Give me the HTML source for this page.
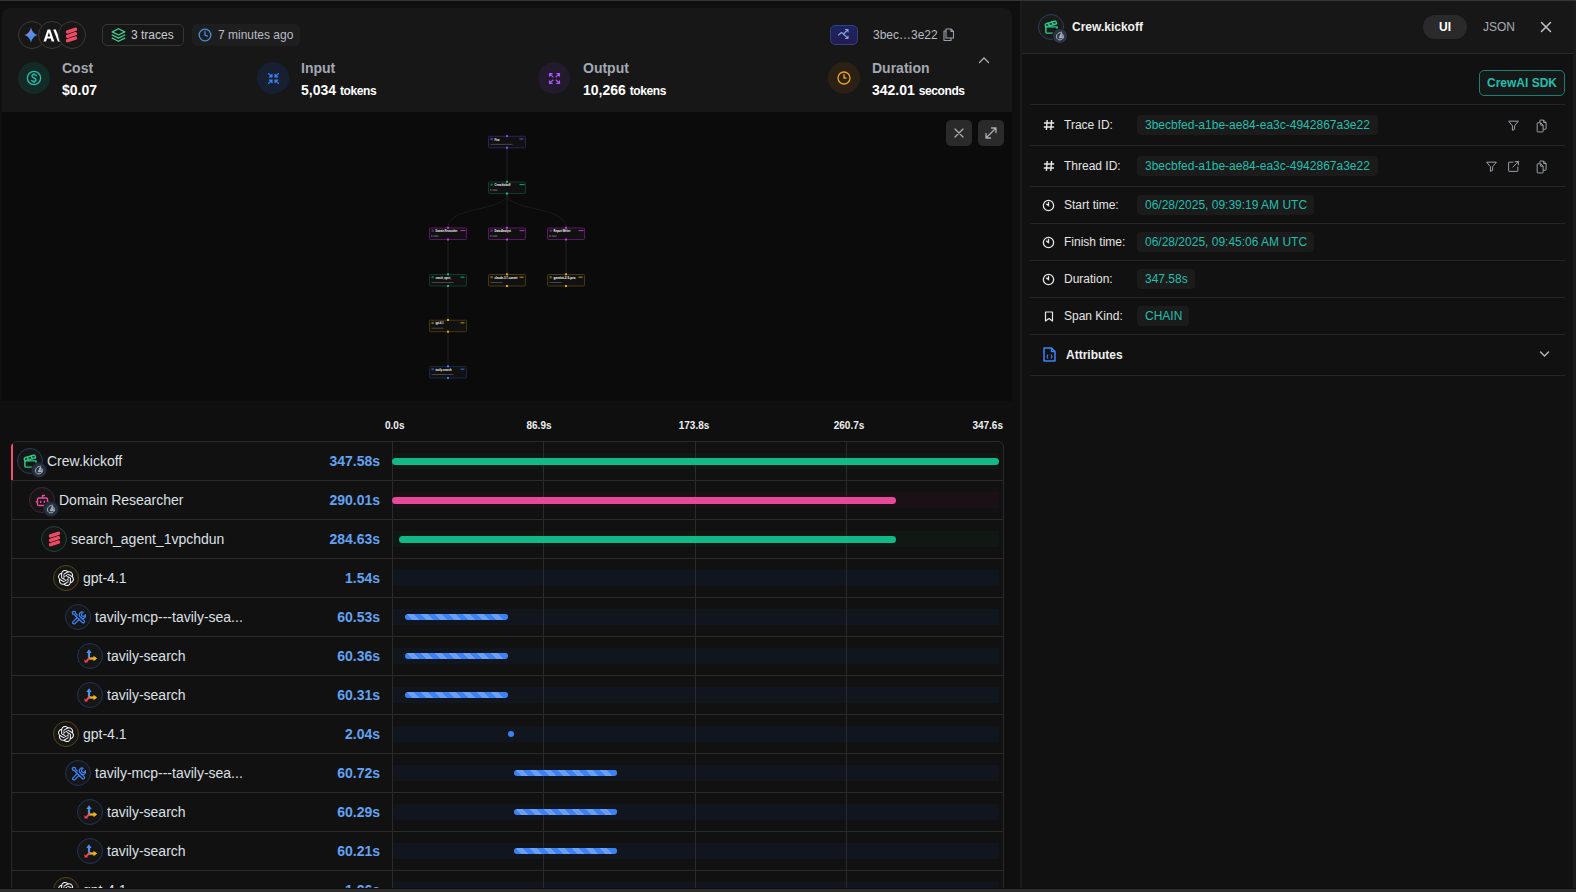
<!DOCTYPE html>
<html><head><meta charset="utf-8">
<style>
*{box-sizing:border-box;margin:0;padding:0}
html,body{width:1576px;height:892px;overflow:hidden;background:#0f0f0f;font-family:"Liberation Sans",sans-serif;color:#e6e6e6}
.abs{position:absolute}
.txt{white-space:nowrap;line-height:1}
</style></head><body>
<div class="abs" style="left:0;top:0;width:1576px;height:1px;background:#353535"></div>
<div class="abs" style="left:2px;top:8px;width:1010px;height:104px;background:#171717;border-radius:8px 8px 0 0"></div>
<div class="abs" style="left:2px;top:112px;width:1010px;height:289px;background:#0b0b0b"></div>
<!-- HEADER -->
<div class="abs" style="left:18px;top:21px;width:28px;height:28px;border-radius:50%;border:1px solid #3d3a33;background:#171717"></div>
<svg class="abs" style="left:24px;top:27px" width="14" height="16" viewBox="0 0 14 16"><defs><linearGradient id="gg" x1="0" y1="0" x2="1" y2="1"><stop offset="0" stop-color="#c07ad8"/><stop offset="0.6" stop-color="#4a8ee8"/><stop offset="1" stop-color="#2aa8f0"/></linearGradient></defs><path d="M7 0.5 C8 4.4 9.8 7 13.5 8 C9.8 9 8 11.6 7 15.5 C6 11.6 4.2 9 0.5 8 C4.2 7 6 4.4 7 0.5Z" fill="url(#gg)"/></svg>
<div class="abs" style="left:38px;top:21px;width:28px;height:28px;border-radius:50%;border:1px solid #3d3a33;background:#171717"></div>
<svg class="abs" style="left:43px;top:29px" width="18" height="13" viewBox="0 0 18 13"><path d="M0.5 12.5 L4.6 0.5 L7.2 0.5 L11.3 12.5 L8.7 12.5 L7.8 9.6 L4 9.6 L3.1 12.5Z M4.6 7.4 L7.2 7.4 L5.9 3.2Z" fill="#fff"/><path d="M10.2 0.5 L12.8 0.5 L17.5 12.5 L14.9 12.5Z" fill="#fff"/></svg>
<div class="abs" style="left:58px;top:21px;width:28px;height:28px;border-radius:50%;border:1px solid #3d3a33;background:#171717"></div>
<svg class="abs" style="left:65px;top:27px" width="13" height="16" viewBox="0 0 13 16"><g stroke="#ee4a62" stroke-width="3.5" stroke-linecap="round"><path d="M2.6 4.9 L10.4 2.3"/><path d="M2.6 9.3 L10.4 6.7"/><path d="M2.6 13.7 L10.4 11.1"/></g></svg>

<div class="abs" style="left:102px;top:24px;width:82px;height:22px;border-radius:5px;border:1px solid #353535"></div>
<svg class="abs" style="left:111px;top:27px" width="15" height="16" viewBox="0 0 24 24" fill="none" stroke="#3fce8e" stroke-width="2.2" stroke-linejoin="round" stroke-linecap="round"><path d="M12 2 L2 7 L12 12 L22 7 Z"/><path d="M2 12 L12 17 L22 12"/><path d="M2 17 L12 22 L22 17"/></svg>
<div class="abs txt" style="left:131px;top:29px;font-size:12px;color:#c9ccd2">3 traces</div>

<div class="abs" style="left:192px;top:24px;width:108px;height:22px;border-radius:5px;background:#1e1e1e"></div>
<svg class="abs" style="left:198px;top:28px" width="14" height="14" viewBox="0 0 24 24" fill="none" stroke="#4a90e2" stroke-width="2.2" stroke-linecap="round"><circle cx="12" cy="12" r="10"/><path d="M12 6 V12 L16 14"/></svg>
<div class="abs txt" style="left:218px;top:29px;font-size:12px;color:#b8bcc4">7 minutes ago</div>

<!-- right of header -->
<div class="abs" style="left:830px;top:25px;width:28px;height:20px;border-radius:5px;background:linear-gradient(180deg,#1c2660,#221c52);border:1px solid #34407a"></div>
<svg class="abs" style="left:837px;top:28px" width="14" height="14" viewBox="0 0 14 14" fill="none" stroke="#8fa0e0" stroke-width="1.1" stroke-linecap="round" stroke-linejoin="round"><path d="M1.5 7 L4.5 4.5 L6.5 6 L11 1.5 M8.5 1.5 H11 V4"/><path d="M6.5 6 L11 10.5 M11 8 V10.5 H8.5"/></svg>
<div class="abs txt" style="left:873px;top:29px;font-size:12px;color:#b8bcc4">3bec…3e22</div>
<svg class="abs" style="left:943px;top:28px" width="11" height="13" viewBox="0 0 11 13" fill="none" stroke="#9ca0a8" stroke-width="1.1" stroke-linejoin="round"><path d="M3 1 H8 L10.5 3.5 V10 H3 Z"/><path d="M8 1 V3.5 H10.5"/><path d="M3 3 H1 V12.5 H8 V10"/></svg>
<svg class="abs" style="left:978px;top:56px" width="12" height="9" viewBox="0 0 12 9" fill="none" stroke="#a8acb4" stroke-width="1.3" stroke-linecap="round"><path d="M1.5 6.5 L6 2 L10.5 6.5"/></svg>

<!-- stats -->
<div class="abs" style="left:18px;top:62px;width:32px;height:32px;border-radius:50%;background:#132a26"></div>
<svg class="abs" style="left:26px;top:70px" width="16" height="16" viewBox="0 0 24 24" fill="none" stroke="#22bfae" stroke-width="2" stroke-linecap="round"><circle cx="12" cy="12" r="10"/><path d="M15.5 8.5 C15 7.5 14 7 12 7 C10 7 9 8 9 9.5 C9 12.5 15 11.5 15 14.5 C15 16 14 17 12 17 C10 17 9 16.5 8.5 15.5 M12 5 V7 M12 17 V19"/></svg>
<div class="abs txt" style="left:62px;top:61px;font-size:14px;font-weight:bold;color:#a3a8b2">Cost</div>
<div class="abs txt" style="left:62px;top:83px;font-size:14px;font-weight:bold;color:#fff">$0.07</div>

<div class="abs" style="left:257px;top:62px;width:32px;height:32px;border-radius:50%;background:#172033"></div>
<svg class="abs" style="left:266.5px;top:71.5px" width="13" height="13" viewBox="0 0 16 16" fill="none" stroke="#3b82f6" stroke-width="1.7" stroke-linecap="round"><path d="M2 2 L6 6 M6 3 V6 H3"/><path d="M14 2 L10 6 M10 3 V6 H13"/><path d="M2 14 L6 10 M3 10 H6 V13"/><path d="M14 14 L10 10 M13 10 H10 V13"/></svg>
<div class="abs txt" style="left:301px;top:61px;font-size:14px;font-weight:bold;color:#a3a8b2">Input</div>
<div class="abs txt" style="left:301px;top:83px;font-size:14px;font-weight:bold;color:#fff">5,034 <span style="font-size:12px;letter-spacing:-0.4px">tokens</span></div>

<div class="abs" style="left:538px;top:62px;width:32px;height:32px;border-radius:50%;background:#231a2e"></div>
<svg class="abs" style="left:547.5px;top:71.5px" width="13" height="13" viewBox="0 0 16 16" fill="none" stroke="#a855f7" stroke-width="1.7" stroke-linecap="round"><path d="M2 2 L6 6 M2 5 V2 H5"/><path d="M14 2 L10 6 M11 2 H14 V5"/><path d="M2 14 L6 10 M2 11 V14 H5"/><path d="M14 14 L10 10 M14 11 V14 H11"/></svg>
<div class="abs txt" style="left:583px;top:61px;font-size:14px;font-weight:bold;color:#a3a8b2">Output</div>
<div class="abs txt" style="left:583px;top:83px;font-size:14px;font-weight:bold;color:#fff">10,266 <span style="font-size:12px;letter-spacing:-0.4px">tokens</span></div>

<div class="abs" style="left:828px;top:62px;width:32px;height:32px;border-radius:50%;background:#2a2114"></div>
<svg class="abs" style="left:836px;top:70px" width="16" height="16" viewBox="0 0 24 24" fill="none" stroke="#f0a020" stroke-width="2" stroke-linecap="round"><circle cx="12" cy="12" r="9"/><path d="M12 7 V12 H15"/></svg>
<div class="abs txt" style="left:872px;top:61px;font-size:14px;font-weight:bold;color:#a3a8b2">Duration</div>
<div class="abs txt" style="left:872px;top:83px;font-size:14px;font-weight:bold;color:#fff">342.01 <span style="font-size:12px;letter-spacing:-0.4px">seconds</span></div>

<svg class="abs" style="left:0;top:0" width="1012" height="401" viewBox="0 0 1012 401" font-family="Liberation Sans">
<g stroke="#333" stroke-width="0.6" fill="none">
<path d="M507 146.5 V182"/>
<path d="M507 193.5 V228"/>
<path d="M507 193.5 C507 212 448 205 448 228" stroke-dasharray="1.5 0.8"/>
<path d="M507 193.5 C507 212 566 205 566 228" stroke-dasharray="1.5 0.8"/>
<path d="M448 239.5 V274.5"/><path d="M507 239.5 V274.5"/><path d="M566 239.5 V274.5"/>
<path d="M448 285.7 V320"/><path d="M448 331.7 V366.5"/>
</g>
<rect x="488.5" y="136.3" width="37" height="11.5" rx="1" fill="#111" stroke="#2e2466" stroke-width="0.9"/>
<rect x="490.5" y="137.9" width="2.2" height="2.2" fill="#8b5cf6" opacity="0.55"/>
<text x="494.5" y="140.5" font-size="3.4" font-weight="bold" fill="#ffffff" textLength="5" lengthAdjust="spacingAndGlyphs">Flow</text>
<rect x="519.5" y="138.5" width="4" height="0.9" fill="#7b4ff0"/>
<rect x="490.5" y="143.9" width="22" height="0.7" fill="#aaa" opacity="0.5"/>
<rect x="506" y="135.10000000000002" width="2" height="2" fill="#7b4ff0"/>
<rect x="506" y="146.8" width="2" height="2" fill="#7b4ff0"/>
<rect x="488.5" y="182" width="37" height="11.5" rx="1" fill="#111" stroke="#12402d" stroke-width="0.9"/>
<rect x="490.5" y="183.6" width="2.2" height="2.2" fill="#12b886" opacity="0.55"/>
<text x="494.5" y="186.2" font-size="3.4" font-weight="bold" fill="#ffffff" textLength="16" lengthAdjust="spacingAndGlyphs">Crew.kickoff</text>
<rect x="519.5" y="184.2" width="5" height="0.9" fill="#12b886"/>
<rect x="490.5" y="189.2" width="0.8" height="1.6" fill="#999"/><rect x="492.5" y="189.6" width="5" height="0.9" fill="#aaa" opacity="0.7"/>
<rect x="506" y="180.8" width="2" height="2" fill="#12b886"/>
<rect x="506" y="192.5" width="2" height="2" fill="#12b886"/>
<rect x="429.5" y="228" width="37" height="11.5" rx="1" fill="#111" stroke="#641a74" stroke-width="0.9"/>
<rect x="431.5" y="229.6" width="2.2" height="2.2" fill="#d030d8" opacity="0.55"/>
<text x="435.5" y="232.2" font-size="3.4" font-weight="bold" fill="#ffffff" textLength="22" lengthAdjust="spacingAndGlyphs">Domain Researcher</text>
<rect x="460.5" y="230.2" width="5" height="0.9" fill="#d030d8"/>
<rect x="431.5" y="235.2" width="0.8" height="1.6" fill="#999"/><rect x="433.5" y="235.6" width="5" height="0.9" fill="#aaa" opacity="0.7"/>
<rect x="447" y="226.8" width="2" height="2" fill="#d030d8"/>
<rect x="447" y="238.5" width="2" height="2" fill="#d030d8"/>
<rect x="488.5" y="228" width="37" height="11.5" rx="1" fill="#111" stroke="#641a74" stroke-width="0.9"/>
<rect x="490.5" y="229.6" width="2.2" height="2.2" fill="#d030d8" opacity="0.55"/>
<text x="494.5" y="232.2" font-size="3.4" font-weight="bold" fill="#ffffff" textLength="16.5" lengthAdjust="spacingAndGlyphs">Data Analyst</text>
<rect x="519.5" y="230.2" width="5" height="0.9" fill="#d030d8"/>
<rect x="490.5" y="235.2" width="0.8" height="1.6" fill="#999"/><rect x="492.5" y="235.6" width="5" height="0.9" fill="#aaa" opacity="0.7"/>
<rect x="506" y="226.8" width="2" height="2" fill="#d030d8"/>
<rect x="506" y="238.5" width="2" height="2" fill="#d030d8"/>
<rect x="547.5" y="228" width="37" height="11.5" rx="1" fill="#111" stroke="#641a74" stroke-width="0.9"/>
<rect x="549.5" y="229.6" width="2.2" height="2.2" fill="#d030d8" opacity="0.55"/>
<text x="553.5" y="232.2" font-size="3.4" font-weight="bold" fill="#ffffff" textLength="17" lengthAdjust="spacingAndGlyphs">Report Writer</text>
<rect x="578.5" y="230.2" width="5" height="0.9" fill="#d030d8"/>
<rect x="549.5" y="235.2" width="0.8" height="1.6" fill="#999"/><rect x="551.5" y="235.6" width="5" height="0.9" fill="#aaa" opacity="0.7"/>
<rect x="565" y="226.8" width="2" height="2" fill="#d030d8"/>
<rect x="565" y="238.5" width="2" height="2" fill="#d030d8"/>
<rect x="429.5" y="274.5" width="37" height="11.5" rx="1" fill="#111" stroke="#12402d" stroke-width="0.9"/>
<rect x="431.5" y="276.1" width="2.2" height="2.2" fill="#12b886" opacity="0.55"/>
<text x="435.5" y="278.7" font-size="3.4" font-weight="bold" fill="#ffffff" textLength="16" lengthAdjust="spacingAndGlyphs">search_agent_</text>
<rect x="460.5" y="276.7" width="4" height="0.9" fill="#12b886"/>
<rect x="431.5" y="282.1" width="22" height="0.7" fill="#aaa" opacity="0.5"/>
<rect x="447" y="273.3" width="2" height="2" fill="#12b886"/>
<rect x="447" y="285.0" width="2" height="2" fill="#12b886"/>
<rect x="488.5" y="274.5" width="37" height="11.5" rx="1" fill="#111" stroke="#4e3c0e" stroke-width="0.9"/>
<rect x="490.5" y="276.1" width="2.2" height="2.2" fill="#e0a800" opacity="0.55"/>
<text x="494.5" y="278.7" font-size="3.4" font-weight="bold" fill="#ffffff" textLength="23" lengthAdjust="spacingAndGlyphs">claude-3.7-sonnet</text>
<rect x="519.5" y="276.7" width="4" height="0.9" fill="#e0a800"/>
<rect x="490.5" y="282.1" width="12" height="0.7" fill="#aaa" opacity="0.5"/>
<rect x="506" y="273.3" width="2" height="2" fill="#e0a800"/>
<rect x="506" y="285.0" width="2" height="2" fill="#e0a800"/>
<rect x="547.5" y="274.5" width="37" height="11.5" rx="1" fill="#111" stroke="#4e3c0e" stroke-width="0.9"/>
<rect x="549.5" y="276.1" width="2.2" height="2.2" fill="#e0a800" opacity="0.55"/>
<text x="553.5" y="278.7" font-size="3.4" font-weight="bold" fill="#ffffff" textLength="22" lengthAdjust="spacingAndGlyphs">gemini-2.5-pro</text>
<rect x="578.5" y="276.7" width="4" height="0.9" fill="#e0a800"/>
<rect x="549.5" y="282.1" width="12" height="0.7" fill="#aaa" opacity="0.5"/>
<rect x="565" y="273.3" width="2" height="2" fill="#e0a800"/>
<rect x="565" y="285.0" width="2" height="2" fill="#e0a800"/>
<rect x="429.5" y="320.2" width="37" height="11.5" rx="1" fill="#111" stroke="#4e3c0e" stroke-width="0.9"/>
<rect x="431.5" y="321.8" width="2.2" height="2.2" fill="#e0a800" opacity="0.55"/>
<text x="435.5" y="324.4" font-size="3.4" font-weight="bold" fill="#ffffff" textLength="8" lengthAdjust="spacingAndGlyphs">gpt-4.1</text>
<rect x="460.5" y="322.4" width="4" height="0.9" fill="#e0a800"/>
<rect x="431.5" y="327.8" width="12" height="0.7" fill="#aaa" opacity="0.5"/>
<rect x="447" y="319.0" width="2" height="2" fill="#e0a800"/>
<rect x="447" y="330.7" width="2" height="2" fill="#e0a800"/>
<rect x="429.5" y="366.5" width="37" height="11.5" rx="1" fill="#111" stroke="#18284e" stroke-width="0.9"/>
<rect x="431.5" y="368.1" width="2.2" height="2.2" fill="#3b82f6" opacity="0.55"/>
<text x="435.5" y="370.7" font-size="3.4" font-weight="bold" fill="#ffffff" textLength="16" lengthAdjust="spacingAndGlyphs">tavily-search</text>
<rect x="460.5" y="368.7" width="4" height="0.9" fill="#3b82f6"/>
<rect x="431.5" y="374.1" width="22" height="0.7" fill="#aaa" opacity="0.5"/>
<rect x="447" y="365.3" width="2" height="2" fill="#3b82f6"/>
<rect x="447" y="377.0" width="2" height="2" fill="#3b82f6"/>
</svg>
<div class="abs" style="left:946px;top:120px;width:26px;height:26px;border-radius:5px;background:#2a2a2a"></div>
<svg class="abs" style="left:953px;top:127px" width="12" height="12" viewBox="0 0 12 12" stroke="#a8acb4" stroke-width="1.3" stroke-linecap="round"><path d="M2 2 L10 10 M10 2 L2 10"/></svg>
<div class="abs" style="left:978px;top:120px;width:26px;height:26px;border-radius:5px;background:#2a2a2a"></div>
<svg class="abs" style="left:984px;top:126px" width="14" height="14" viewBox="0 0 14 14" fill="none" stroke="#a8acb4" stroke-width="1.3" stroke-linecap="round" stroke-linejoin="round"><path d="M2 12 L12 2 M7.5 2 H12 V6.5 M2 7.5 V12 H6.5"/></svg>
<div class="abs" style="left:0;top:401px;width:1012px;height:488px;overflow:hidden">
<div class="abs" style="left:0;top:-401px;width:1012px;height:892px">
<div class="abs txt" style="left:385px;top:421px;font-size:10px;font-weight:bold;color:#f0f0f0">0.0s</div>
<div class="abs txt" style="left:499px;width:80px;text-align:center;top:421px;font-size:10px;font-weight:bold;color:#f0f0f0">86.9s</div>
<div class="abs txt" style="left:654px;width:80px;text-align:center;top:421px;font-size:10px;font-weight:bold;color:#f0f0f0">173.8s</div>
<div class="abs txt" style="left:809px;width:80px;text-align:center;top:421px;font-size:10px;font-weight:bold;color:#f0f0f0">260.7s</div>
<div class="abs txt" style="left:903px;width:100px;text-align:right;top:421px;font-size:10px;font-weight:bold;color:#f0f0f0">347.6s</div>
<div class="abs" style="left:11px;top:441px;width:993px;height:460px;border:1px solid #2a2a2a;border-radius:6px 6px 0 0;background:#111"></div>
<div class="abs" style="left:393px;top:453px;width:606px;height:16px;background:#101814"></div>
<div class="abs" style="left:393px;top:492px;width:606px;height:16px;background:#1a1116"></div>
<div class="abs" style="left:393px;top:531px;width:606px;height:16px;background:#101814"></div>
<div class="abs" style="left:393px;top:570px;width:606px;height:16px;background:#11151d"></div>
<div class="abs" style="left:393px;top:609px;width:606px;height:16px;background:#11151d"></div>
<div class="abs" style="left:393px;top:648px;width:606px;height:16px;background:#11151d"></div>
<div class="abs" style="left:393px;top:687px;width:606px;height:16px;background:#11151d"></div>
<div class="abs" style="left:393px;top:726px;width:606px;height:16px;background:#11151d"></div>
<div class="abs" style="left:393px;top:765px;width:606px;height:16px;background:#11151d"></div>
<div class="abs" style="left:393px;top:804px;width:606px;height:16px;background:#11151d"></div>
<div class="abs" style="left:393px;top:843px;width:606px;height:16px;background:#11151d"></div>
<div class="abs" style="left:393px;top:882px;width:606px;height:16px;background:#11151d"></div>
<div class="abs" style="left:392px;top:442px;width:1px;height:447px;background:#2a2a2a"></div>
<div class="abs" style="left:543px;top:442px;width:1px;height:447px;background:#2a2a2a"></div>
<div class="abs" style="left:695px;top:442px;width:1px;height:447px;background:#2a2a2a"></div>
<div class="abs" style="left:846px;top:442px;width:1px;height:447px;background:#2a2a2a"></div>
<div class="abs" style="left:17px;top:448px;width:26px;height:26px;border-radius:50%;border:1px solid #2a3f5c;background:#161616;display:flex;align-items:center;justify-content:center"><svg width="15" height="15" viewBox="0 0 24 24" fill="none" stroke="#2bc98a" stroke-width="2.3" stroke-linejoin="round" stroke-linecap="round"><path d="M20.2 6 3 11l-.9-2.4c-.3-1.1.3-2.2 1.3-2.5l13.5-4c1.1-.3 2.2.3 2.5 1.3Z"/><path d="m6.2 5.3 3.1 3.9"/><path d="m12.4 3.4 3.1 4"/><path d="M3 11h18v8a2 2 0 0 1-2 2H5a2 2 0 0 1-2-2Z"/></svg></div>
<div class="abs" style="left:31px;top:462px;width:16px;height:16px;border-radius:50%;background:#263040;border:1px solid #1a1f28;display:flex;align-items:center;justify-content:center"><svg width="10" height="10" viewBox="0 0 10 10" fill="none" stroke="#c8ccd4" stroke-width="0.8" stroke-linecap="round"><path d="M6.8 1.2 C3.8 1 1.3 3.3 1.5 6 C1.7 8 3.3 9 5 8.9 C6.8 8.8 8.4 7.6 8.6 5.6 C8.7 4.5 8.2 3.6 7.5 3.2"/><path d="M6.2 2.6 L4.2 6.8 L7.2 6.6 Z" fill="#9aa0aa"/></svg></div>
<div class="abs txt" style="left:47px;top:454px;font-size:14px;color:#dde0e5">Crew.kickoff</div>
<div class="abs txt" style="left:280px;width:100px;text-align:right;top:454px;font-size:14px;font-weight:bold;color:#62a2f2">347.58s</div>
<div class="abs" style="left:392px;top:457.5px;width:607px;height:7px;border-radius:4px;background:#12b886"></div>
<div class="abs" style="left:12px;top:480px;width:991px;height:1px;background:#2a2a2a"></div>
<div class="abs" style="left:29px;top:487px;width:26px;height:26px;border-radius:50%;border:1px solid #4a2238;background:#161616;display:flex;align-items:center;justify-content:center"><svg width="15" height="15" viewBox="0 0 24 24" fill="none" stroke="#e8489a" stroke-width="2.3" stroke-linejoin="round" stroke-linecap="round"><path d="M12 8V4H15"/><rect width="16" height="12" x="4" y="8" rx="2"/><path d="M2 14h2M20 14h2M15 13v2M9 13v2"/></svg></div>
<div class="abs" style="left:43px;top:501px;width:16px;height:16px;border-radius:50%;background:#263040;border:1px solid #1a1f28;display:flex;align-items:center;justify-content:center"><svg width="10" height="10" viewBox="0 0 10 10" fill="none" stroke="#c8ccd4" stroke-width="0.8" stroke-linecap="round"><path d="M6.8 1.2 C3.8 1 1.3 3.3 1.5 6 C1.7 8 3.3 9 5 8.9 C6.8 8.8 8.4 7.6 8.6 5.6 C8.7 4.5 8.2 3.6 7.5 3.2"/><path d="M6.2 2.6 L4.2 6.8 L7.2 6.6 Z" fill="#9aa0aa"/></svg></div>
<div class="abs txt" style="left:59px;top:493px;font-size:14px;color:#dde0e5">Domain Researcher</div>
<div class="abs txt" style="left:280px;width:100px;text-align:right;top:493px;font-size:14px;font-weight:bold;color:#62a2f2">290.01s</div>
<div class="abs" style="left:392px;top:496.5px;width:504px;height:7px;border-radius:4px;background:#e8489a"></div>
<div class="abs" style="left:12px;top:519px;width:991px;height:1px;background:#2a2a2a"></div>
<div class="abs" style="left:41px;top:526px;width:26px;height:26px;border-radius:50%;border:1px solid #1c4a34;background:#161616;display:flex;align-items:center;justify-content:center"><svg width="13" height="16" viewBox="0 0 13 16"><g stroke="#ee4a62" stroke-width="3.5" stroke-linecap="round"><path d="M2.6 4.9 L10.4 2.3"/><path d="M2.6 9.3 L10.4 6.7"/><path d="M2.6 13.7 L10.4 11.1"/></g></svg></div>
<div class="abs txt" style="left:71px;top:532px;font-size:14px;color:#dde0e5">search_agent_1vpchdun</div>
<div class="abs txt" style="left:280px;width:100px;text-align:right;top:532px;font-size:14px;font-weight:bold;color:#62a2f2">284.63s</div>
<div class="abs" style="left:399px;top:535.5px;width:497px;height:7px;border-radius:4px;background:#12b886"></div>
<div class="abs" style="left:12px;top:558px;width:991px;height:1px;background:#2a2a2a"></div>
<div class="abs" style="left:53px;top:565px;width:26px;height:26px;border-radius:50%;border:1px solid #5a4510;background:#161616;display:flex;align-items:center;justify-content:center"><svg width="16" height="16" viewBox="0 0 24 24"><path fill="#f4f4f4" d="M22.2819 9.8211a5.9847 5.9847 0 0 0-.5157-4.9108 6.0462 6.0462 0 0 0-6.5098-2.9A6.0651 6.0651 0 0 0 4.9807 4.1818a5.9847 5.9847 0 0 0-3.9977 2.9 6.0462 6.0462 0 0 0 .7427 7.0966 5.98 5.98 0 0 0 .511 4.9107 6.051 6.051 0 0 0 6.5146 2.9001A5.9847 5.9847 0 0 0 13.2599 24a6.0557 6.0557 0 0 0 5.7718-4.2058 5.9894 5.9894 0 0 0 3.9977-2.9001 6.0557 6.0557 0 0 0-.7475-7.0729zm-9.022 12.6081a4.4755 4.4755 0 0 1-2.8764-1.0408l.1419-.0804 4.7783-2.7582a.7948.7948 0 0 0 .3927-.6813v-6.7369l2.02 1.1686a.071.071 0 0 1 .038.052v5.5826a4.504 4.504 0 0 1-4.4945 4.4944zm-9.6607-4.1254a4.4708 4.4708 0 0 1-.5346-3.0137l.142.0852 4.783 2.7582a.7712.7712 0 0 0 .7806 0l5.8428-3.3685v2.3324a.0804.0804 0 0 1-.0332.0615L9.74 19.9502a4.4992 4.4992 0 0 1-6.1408-1.6464zM2.3408 7.8956a4.485 4.485 0 0 1 2.3655-1.9728V11.6a.7664.7664 0 0 0 .3879.6765l5.8144 3.3543-2.0201 1.1685a.0757.0757 0 0 1-.071 0l-4.8303-2.7865A4.504 4.504 0 0 1 2.3408 7.872zm16.5963 3.8558L13.1038 8.364 15.1192 7.2a.0757.0757 0 0 1 .071 0l4.8303 2.7913a4.4944 4.4944 0 0 1-.6765 8.1042v-5.6772a.79.79 0 0 0-.407-.667zm2.0107-3.0231l-.142-.0852-4.7735-2.7818a.7759.7759 0 0 0-.7854 0L9.409 9.2297V6.8974a.0662.0662 0 0 1 .0284-.0615l4.8303-2.7866a4.4992 4.4992 0 0 1 6.6802 4.66zM8.3065 12.863l-2.02-1.1638a.0804.0804 0 0 1-.038-.0567V6.0742a4.4992 4.4992 0 0 1 7.3757-3.4537l-.142.0805L8.704 5.459a.7948.7948 0 0 0-.3927.6813zm1.0976-2.3654l2.602-1.4998 2.6069 1.4998v2.9994l-2.5974 1.5087-2.6067-1.4997Z"/></svg></div>
<div class="abs txt" style="left:83px;top:571px;font-size:14px;color:#dde0e5">gpt-4.1</div>
<div class="abs txt" style="left:280px;width:100px;text-align:right;top:571px;font-size:14px;font-weight:bold;color:#62a2f2">1.54s</div>
<div class="abs" style="left:12px;top:597px;width:991px;height:1px;background:#2a2a2a"></div>
<div class="abs" style="left:65px;top:604px;width:26px;height:26px;border-radius:50%;border:1px solid #1f3658;background:#161616;display:flex;align-items:center;justify-content:center"><svg width="15" height="15" viewBox="0 0 24 24" fill="none" stroke="#3b82f6" stroke-width="1.9" stroke-linecap="round" stroke-linejoin="round"><path d="M3 21 L4 22 a1.4 1.4 0 0 0 2 0 L13 15"/><path d="M3 21 a1.4 1.4 0 0 1 0 -2 L10 12"/><path d="M13 15 L15 17 M10 12 L8 10"/><path d="M8 10 L5 7 L3 7 L2 4 L4 2 L7 3 L7 5 L10 8"/><path d="M14 10 L21 17 a2.1 2.1 0 0 1 -3 3 L11 13"/><path d="M14 10 a4.5 4.5 0 0 1 5.5 -6.5 L16.5 6.5 L17.5 9.5 L20.5 10.5 L23 7.5 a4.5 4.5 0 0 1 -6.5 5.5"/></svg></div>
<div class="abs txt" style="left:95px;top:610px;font-size:14px;color:#dde0e5">tavily-mcp---tavily-sea...</div>
<div class="abs txt" style="left:280px;width:100px;text-align:right;top:610px;font-size:14px;font-weight:bold;color:#62a2f2">60.53s</div>
<div class="abs" style="left:405px;top:613.8px;width:103px;height:6.4px;border-radius:4px;background:repeating-linear-gradient(45deg,#3b82f6 0 5px,#6a9ff5 5px 10px)"></div>
<div class="abs" style="left:12px;top:636px;width:991px;height:1px;background:#2a2a2a"></div>
<div class="abs" style="left:77px;top:643px;width:26px;height:26px;border-radius:50%;border:1px solid #1f3658;background:#161616;display:flex;align-items:center;justify-content:center"><svg width="16" height="16" viewBox="0 0 16 16"><path d="M7 10.5 L7 4" stroke="#4a90f0" stroke-width="2.2"/><path d="M4.3 5 L7 1.2 L9.7 5Z" fill="#4a90f0"/><path d="M7 10.5 L12 10.5" stroke="#f0b820" stroke-width="2.2"/><path d="M11.5 7.8 L15.2 10.5 L11.5 13.2Z" fill="#f0b820"/><path d="M7.5 10 L4.5 13" stroke="#ee4455" stroke-width="2"/><path d="M2.2 11.2 L2.8 14.8 L6.2 14.2Z" fill="#ee4455"/></svg></div>
<div class="abs txt" style="left:107px;top:649px;font-size:14px;color:#dde0e5">tavily-search</div>
<div class="abs txt" style="left:280px;width:100px;text-align:right;top:649px;font-size:14px;font-weight:bold;color:#62a2f2">60.36s</div>
<div class="abs" style="left:405px;top:652.8px;width:103px;height:6.4px;border-radius:4px;background:repeating-linear-gradient(45deg,#3b82f6 0 5px,#6a9ff5 5px 10px)"></div>
<div class="abs" style="left:12px;top:675px;width:991px;height:1px;background:#2a2a2a"></div>
<div class="abs" style="left:77px;top:682px;width:26px;height:26px;border-radius:50%;border:1px solid #1f3658;background:#161616;display:flex;align-items:center;justify-content:center"><svg width="16" height="16" viewBox="0 0 16 16"><path d="M7 10.5 L7 4" stroke="#4a90f0" stroke-width="2.2"/><path d="M4.3 5 L7 1.2 L9.7 5Z" fill="#4a90f0"/><path d="M7 10.5 L12 10.5" stroke="#f0b820" stroke-width="2.2"/><path d="M11.5 7.8 L15.2 10.5 L11.5 13.2Z" fill="#f0b820"/><path d="M7.5 10 L4.5 13" stroke="#ee4455" stroke-width="2"/><path d="M2.2 11.2 L2.8 14.8 L6.2 14.2Z" fill="#ee4455"/></svg></div>
<div class="abs txt" style="left:107px;top:688px;font-size:14px;color:#dde0e5">tavily-search</div>
<div class="abs txt" style="left:280px;width:100px;text-align:right;top:688px;font-size:14px;font-weight:bold;color:#62a2f2">60.31s</div>
<div class="abs" style="left:405px;top:691.8px;width:103px;height:6.4px;border-radius:4px;background:repeating-linear-gradient(45deg,#3b82f6 0 5px,#6a9ff5 5px 10px)"></div>
<div class="abs" style="left:12px;top:714px;width:991px;height:1px;background:#2a2a2a"></div>
<div class="abs" style="left:53px;top:721px;width:26px;height:26px;border-radius:50%;border:1px solid #5a4510;background:#161616;display:flex;align-items:center;justify-content:center"><svg width="16" height="16" viewBox="0 0 24 24"><path fill="#f4f4f4" d="M22.2819 9.8211a5.9847 5.9847 0 0 0-.5157-4.9108 6.0462 6.0462 0 0 0-6.5098-2.9A6.0651 6.0651 0 0 0 4.9807 4.1818a5.9847 5.9847 0 0 0-3.9977 2.9 6.0462 6.0462 0 0 0 .7427 7.0966 5.98 5.98 0 0 0 .511 4.9107 6.051 6.051 0 0 0 6.5146 2.9001A5.9847 5.9847 0 0 0 13.2599 24a6.0557 6.0557 0 0 0 5.7718-4.2058 5.9894 5.9894 0 0 0 3.9977-2.9001 6.0557 6.0557 0 0 0-.7475-7.0729zm-9.022 12.6081a4.4755 4.4755 0 0 1-2.8764-1.0408l.1419-.0804 4.7783-2.7582a.7948.7948 0 0 0 .3927-.6813v-6.7369l2.02 1.1686a.071.071 0 0 1 .038.052v5.5826a4.504 4.504 0 0 1-4.4945 4.4944zm-9.6607-4.1254a4.4708 4.4708 0 0 1-.5346-3.0137l.142.0852 4.783 2.7582a.7712.7712 0 0 0 .7806 0l5.8428-3.3685v2.3324a.0804.0804 0 0 1-.0332.0615L9.74 19.9502a4.4992 4.4992 0 0 1-6.1408-1.6464zM2.3408 7.8956a4.485 4.485 0 0 1 2.3655-1.9728V11.6a.7664.7664 0 0 0 .3879.6765l5.8144 3.3543-2.0201 1.1685a.0757.0757 0 0 1-.071 0l-4.8303-2.7865A4.504 4.504 0 0 1 2.3408 7.872zm16.5963 3.8558L13.1038 8.364 15.1192 7.2a.0757.0757 0 0 1 .071 0l4.8303 2.7913a4.4944 4.4944 0 0 1-.6765 8.1042v-5.6772a.79.79 0 0 0-.407-.667zm2.0107-3.0231l-.142-.0852-4.7735-2.7818a.7759.7759 0 0 0-.7854 0L9.409 9.2297V6.8974a.0662.0662 0 0 1 .0284-.0615l4.8303-2.7866a4.4992 4.4992 0 0 1 6.6802 4.66zM8.3065 12.863l-2.02-1.1638a.0804.0804 0 0 1-.038-.0567V6.0742a4.4992 4.4992 0 0 1 7.3757-3.4537l-.142.0805L8.704 5.459a.7948.7948 0 0 0-.3927.6813zm1.0976-2.3654l2.602-1.4998 2.6069 1.4998v2.9994l-2.5974 1.5087-2.6067-1.4997Z"/></svg></div>
<div class="abs txt" style="left:83px;top:727px;font-size:14px;color:#dde0e5">gpt-4.1</div>
<div class="abs txt" style="left:280px;width:100px;text-align:right;top:727px;font-size:14px;font-weight:bold;color:#62a2f2">2.04s</div>
<div class="abs" style="left:508px;top:731px;width:6px;height:6px;border-radius:50%;background:#3b82f6"></div>
<div class="abs" style="left:12px;top:753px;width:991px;height:1px;background:#2a2a2a"></div>
<div class="abs" style="left:65px;top:760px;width:26px;height:26px;border-radius:50%;border:1px solid #1f3658;background:#161616;display:flex;align-items:center;justify-content:center"><svg width="15" height="15" viewBox="0 0 24 24" fill="none" stroke="#3b82f6" stroke-width="1.9" stroke-linecap="round" stroke-linejoin="round"><path d="M3 21 L4 22 a1.4 1.4 0 0 0 2 0 L13 15"/><path d="M3 21 a1.4 1.4 0 0 1 0 -2 L10 12"/><path d="M13 15 L15 17 M10 12 L8 10"/><path d="M8 10 L5 7 L3 7 L2 4 L4 2 L7 3 L7 5 L10 8"/><path d="M14 10 L21 17 a2.1 2.1 0 0 1 -3 3 L11 13"/><path d="M14 10 a4.5 4.5 0 0 1 5.5 -6.5 L16.5 6.5 L17.5 9.5 L20.5 10.5 L23 7.5 a4.5 4.5 0 0 1 -6.5 5.5"/></svg></div>
<div class="abs txt" style="left:95px;top:766px;font-size:14px;color:#dde0e5">tavily-mcp---tavily-sea...</div>
<div class="abs txt" style="left:280px;width:100px;text-align:right;top:766px;font-size:14px;font-weight:bold;color:#62a2f2">60.72s</div>
<div class="abs" style="left:514px;top:769.8px;width:103px;height:6.4px;border-radius:4px;background:repeating-linear-gradient(45deg,#3b82f6 0 5px,#6a9ff5 5px 10px)"></div>
<div class="abs" style="left:12px;top:792px;width:991px;height:1px;background:#2a2a2a"></div>
<div class="abs" style="left:77px;top:799px;width:26px;height:26px;border-radius:50%;border:1px solid #1f3658;background:#161616;display:flex;align-items:center;justify-content:center"><svg width="16" height="16" viewBox="0 0 16 16"><path d="M7 10.5 L7 4" stroke="#4a90f0" stroke-width="2.2"/><path d="M4.3 5 L7 1.2 L9.7 5Z" fill="#4a90f0"/><path d="M7 10.5 L12 10.5" stroke="#f0b820" stroke-width="2.2"/><path d="M11.5 7.8 L15.2 10.5 L11.5 13.2Z" fill="#f0b820"/><path d="M7.5 10 L4.5 13" stroke="#ee4455" stroke-width="2"/><path d="M2.2 11.2 L2.8 14.8 L6.2 14.2Z" fill="#ee4455"/></svg></div>
<div class="abs txt" style="left:107px;top:805px;font-size:14px;color:#dde0e5">tavily-search</div>
<div class="abs txt" style="left:280px;width:100px;text-align:right;top:805px;font-size:14px;font-weight:bold;color:#62a2f2">60.29s</div>
<div class="abs" style="left:514px;top:808.8px;width:103px;height:6.4px;border-radius:4px;background:repeating-linear-gradient(45deg,#3b82f6 0 5px,#6a9ff5 5px 10px)"></div>
<div class="abs" style="left:12px;top:831px;width:991px;height:1px;background:#2a2a2a"></div>
<div class="abs" style="left:77px;top:838px;width:26px;height:26px;border-radius:50%;border:1px solid #1f3658;background:#161616;display:flex;align-items:center;justify-content:center"><svg width="16" height="16" viewBox="0 0 16 16"><path d="M7 10.5 L7 4" stroke="#4a90f0" stroke-width="2.2"/><path d="M4.3 5 L7 1.2 L9.7 5Z" fill="#4a90f0"/><path d="M7 10.5 L12 10.5" stroke="#f0b820" stroke-width="2.2"/><path d="M11.5 7.8 L15.2 10.5 L11.5 13.2Z" fill="#f0b820"/><path d="M7.5 10 L4.5 13" stroke="#ee4455" stroke-width="2"/><path d="M2.2 11.2 L2.8 14.8 L6.2 14.2Z" fill="#ee4455"/></svg></div>
<div class="abs txt" style="left:107px;top:844px;font-size:14px;color:#dde0e5">tavily-search</div>
<div class="abs txt" style="left:280px;width:100px;text-align:right;top:844px;font-size:14px;font-weight:bold;color:#62a2f2">60.21s</div>
<div class="abs" style="left:514px;top:847.8px;width:103px;height:6.4px;border-radius:4px;background:repeating-linear-gradient(45deg,#3b82f6 0 5px,#6a9ff5 5px 10px)"></div>
<div class="abs" style="left:12px;top:870px;width:991px;height:1px;background:#2a2a2a"></div>
<div class="abs" style="left:53px;top:877px;width:26px;height:26px;border-radius:50%;border:1px solid #5a4510;background:#161616;display:flex;align-items:center;justify-content:center"><svg width="16" height="16" viewBox="0 0 24 24"><path fill="#f4f4f4" d="M22.2819 9.8211a5.9847 5.9847 0 0 0-.5157-4.9108 6.0462 6.0462 0 0 0-6.5098-2.9A6.0651 6.0651 0 0 0 4.9807 4.1818a5.9847 5.9847 0 0 0-3.9977 2.9 6.0462 6.0462 0 0 0 .7427 7.0966 5.98 5.98 0 0 0 .511 4.9107 6.051 6.051 0 0 0 6.5146 2.9001A5.9847 5.9847 0 0 0 13.2599 24a6.0557 6.0557 0 0 0 5.7718-4.2058 5.9894 5.9894 0 0 0 3.9977-2.9001 6.0557 6.0557 0 0 0-.7475-7.0729zm-9.022 12.6081a4.4755 4.4755 0 0 1-2.8764-1.0408l.1419-.0804 4.7783-2.7582a.7948.7948 0 0 0 .3927-.6813v-6.7369l2.02 1.1686a.071.071 0 0 1 .038.052v5.5826a4.504 4.504 0 0 1-4.4945 4.4944zm-9.6607-4.1254a4.4708 4.4708 0 0 1-.5346-3.0137l.142.0852 4.783 2.7582a.7712.7712 0 0 0 .7806 0l5.8428-3.3685v2.3324a.0804.0804 0 0 1-.0332.0615L9.74 19.9502a4.4992 4.4992 0 0 1-6.1408-1.6464zM2.3408 7.8956a4.485 4.485 0 0 1 2.3655-1.9728V11.6a.7664.7664 0 0 0 .3879.6765l5.8144 3.3543-2.0201 1.1685a.0757.0757 0 0 1-.071 0l-4.8303-2.7865A4.504 4.504 0 0 1 2.3408 7.872zm16.5963 3.8558L13.1038 8.364 15.1192 7.2a.0757.0757 0 0 1 .071 0l4.8303 2.7913a4.4944 4.4944 0 0 1-.6765 8.1042v-5.6772a.79.79 0 0 0-.407-.667zm2.0107-3.0231l-.142-.0852-4.7735-2.7818a.7759.7759 0 0 0-.7854 0L9.409 9.2297V6.8974a.0662.0662 0 0 1 .0284-.0615l4.8303-2.7866a4.4992 4.4992 0 0 1 6.6802 4.66zM8.3065 12.863l-2.02-1.1638a.0804.0804 0 0 1-.038-.0567V6.0742a4.4992 4.4992 0 0 1 7.3757-3.4537l-.142.0805L8.704 5.459a.7948.7948 0 0 0-.3927.6813zm1.0976-2.3654l2.602-1.4998 2.6069 1.4998v2.9994l-2.5974 1.5087-2.6067-1.4997Z"/></svg></div>
<div class="abs txt" style="left:83px;top:883px;font-size:14px;color:#dde0e5">gpt-4.1</div>
<div class="abs txt" style="left:280px;width:100px;text-align:right;top:883px;font-size:14px;font-weight:bold;color:#62a2f2">1.26s</div>
<div class="abs" style="left:11px;top:444px;width:2px;height:36px;background:#f0506e;border-radius:2px 0 0 0"></div>
</div></div>
<div class="abs" style="left:1020px;top:1px;width:556px;height:888px;background:#111;border-left:2px solid #1b1b1b;border-right:3px solid #1b1b1b">
<div class="abs" style="left:0;top:0;width:551px;height:53px;background:#171717;border-bottom:1px solid #2a2a2a"></div>
</div>
<div class="abs" style="left:1038px;top:14px;width:26px;height:26px;border-radius:50%;border:1px solid #2a3f5c;background:#1b1b1b;display:flex;align-items:center;justify-content:center"><svg width="15" height="15" viewBox="0 0 24 24" fill="none" stroke="#2bc98a" stroke-width="2.3" stroke-linejoin="round" stroke-linecap="round"><path d="M20.2 6 3 11l-.9-2.4c-.3-1.1.3-2.2 1.3-2.5l13.5-4c1.1-.3 2.2.3 2.5 1.3Z"/><path d="m6.2 5.3 3.1 3.9"/><path d="m12.4 3.4 3.1 4"/><path d="M3 11h18v8a2 2 0 0 1-2 2H5a2 2 0 0 1-2-2Z"/></svg></div>
<div class="abs" style="left:1052px;top:28px;width:16px;height:16px;border-radius:50%;background:#2a3444;border:1.5px solid #171717;display:flex;align-items:center;justify-content:center"><svg width="10" height="10" viewBox="0 0 10 10" fill="none" stroke="#c8ccd4" stroke-width="0.8" stroke-linecap="round"><path d="M6.8 1.2 C3.8 1 1.3 3.3 1.5 6 C1.7 8 3.3 9 5 8.9 C6.8 8.8 8.4 7.6 8.6 5.6 C8.7 4.5 8.2 3.6 7.5 3.2"/><path d="M6.2 2.6 L4.2 6.8 L7.2 6.6 Z" fill="#9aa0aa"/></svg></div>
<div class="abs txt" style="left:1072px;top:21px;font-size:12px;font-weight:bold;color:#f2f2f2">Crew.kickoff</div>
<div class="abs" style="left:1423px;top:15px;width:44px;height:24px;border-radius:12px;background:#2a2a2a"></div>
<div class="abs txt" style="left:1423px;width:44px;text-align:center;top:21px;font-size:12px;font-weight:bold;color:#fff">UI</div>
<div class="abs txt" style="left:1483px;top:21px;font-size:12px;color:#a8acb4">JSON</div>
<svg class="abs" style="left:1540px;top:21px" width="12" height="12" viewBox="0 0 12 12" stroke="#c0c4cc" stroke-width="1.5" stroke-linecap="round"><path d="M1.5 1.5 L10.5 10.5 M10.5 1.5 L1.5 10.5"/></svg>
<div class="abs" style="left:1479px;top:70px;width:86px;height:26px;border-radius:5px;border:1px solid #1c7d74;background:#161818"></div>
<div class="abs txt" style="left:1479px;width:86px;text-align:center;top:77px;font-size:12px;font-weight:bold;color:#22bfae">CrewAI SDK</div>
<div class="abs" style="left:1030px;top:104px;width:535px;height:1px;background:#262626"></div>
<div class="abs" style="left:1030px;top:145px;width:535px;height:1px;background:#262626"></div>
<div class="abs" style="left:1030px;top:186px;width:535px;height:1px;background:#262626"></div>
<div class="abs" style="left:1030px;top:223px;width:535px;height:1px;background:#262626"></div>
<div class="abs" style="left:1030px;top:260px;width:535px;height:1px;background:#262626"></div>
<div class="abs" style="left:1030px;top:297px;width:535px;height:1px;background:#262626"></div>
<div class="abs" style="left:1030px;top:334px;width:535px;height:1px;background:#262626"></div>
<div class="abs" style="left:1030px;top:375px;width:535px;height:1px;background:#262626"></div>
<div class="abs" style="left:1042px;top:118.5px;width:13px;height:13px;display:flex;align-items:center;justify-content:center"><svg width="12" height="12" viewBox="0 0 12 12" stroke="#e8e8e8" stroke-width="1.4"><path d="M4.2 1 L3.4 11 M8.6 1 L7.8 11 M1 4 H11.2 M0.8 8 H11"/></svg></div>
<div class="abs txt" style="left:1064px;top:119.0px;font-size:12px;color:#e4e4e4">Trace ID:</div>
<div class="abs" style="left:1137px;top:115.0px;width:241px;height:20px;border-radius:4px;background:#1b1b1b"></div>
<div class="abs txt" style="left:1145px;top:119.0px;font-size:12px;color:#22bfae">3becbfed-a1be-ae84-ea3c-4942867a3e22</div>
<svg class="abs" style="left:1507px;top:118.5px" width="13" height="13" viewBox="0 0 24 24" fill="none" stroke="#a0a4ac" stroke-width="1.8" stroke-linejoin="round"><path d="M3 4 H21 L14 12.5 V19 L10 21 V12.5 Z"/></svg>
<svg class="abs" style="left:1535px;top:118.5px" width="13" height="14" viewBox="0 0 24 26" fill="none" stroke="#a0a4ac" stroke-width="1.8" stroke-linejoin="round"><path d="M9 6 V3 a1 1 0 0 1 1 -1 H16 L20.5 6.5 V18 a1 1 0 0 1 -1 1 H15.5"/><path d="M16 2 V6.5 H20.5"/><path d="M4 8 a1 1 0 0 1 1 -1 H10.5 L15 11.5 V23 a1 1 0 0 1 -1 1 H5 a1 1 0 0 1 -1 -1 Z"/><path d="M10.5 7 V11.5 H15"/></svg>
<div class="abs" style="left:1042px;top:159.5px;width:13px;height:13px;display:flex;align-items:center;justify-content:center"><svg width="12" height="12" viewBox="0 0 12 12" stroke="#e8e8e8" stroke-width="1.4"><path d="M4.2 1 L3.4 11 M8.6 1 L7.8 11 M1 4 H11.2 M0.8 8 H11"/></svg></div>
<div class="abs txt" style="left:1064px;top:160.0px;font-size:12px;color:#e4e4e4">Thread ID:</div>
<div class="abs" style="left:1137px;top:156.0px;width:241px;height:20px;border-radius:4px;background:#1b1b1b"></div>
<div class="abs txt" style="left:1145px;top:160.0px;font-size:12px;color:#22bfae">3becbfed-a1be-ae84-ea3c-4942867a3e22</div>
<svg class="abs" style="left:1485px;top:159.5px" width="13" height="13" viewBox="0 0 24 24" fill="none" stroke="#a0a4ac" stroke-width="1.8" stroke-linejoin="round"><path d="M3 4 H21 L14 12.5 V19 L10 21 V12.5 Z"/></svg>
<svg class="abs" style="left:1507px;top:159.5px" width="13" height="13" viewBox="0 0 24 24" fill="none" stroke="#a0a4ac" stroke-width="1.8" stroke-linecap="round" stroke-linejoin="round"><path d="M20 13 V20 a1 1 0 0 1 -1 1 H4 a1 1 0 0 1 -1 -1 V5 a1 1 0 0 1 1 -1 H11"/><path d="M15 3 H21 V9 M21 3 L11 13"/></svg>
<svg class="abs" style="left:1535px;top:159.5px" width="13" height="14" viewBox="0 0 24 26" fill="none" stroke="#a0a4ac" stroke-width="1.8" stroke-linejoin="round"><path d="M9 6 V3 a1 1 0 0 1 1 -1 H16 L20.5 6.5 V18 a1 1 0 0 1 -1 1 H15.5"/><path d="M16 2 V6.5 H20.5"/><path d="M4 8 a1 1 0 0 1 1 -1 H10.5 L15 11.5 V23 a1 1 0 0 1 -1 1 H5 a1 1 0 0 1 -1 -1 Z"/><path d="M10.5 7 V11.5 H15"/></svg>
<div class="abs" style="left:1042px;top:198.5px;width:13px;height:13px;display:flex;align-items:center;justify-content:center"><svg width="13" height="13" viewBox="0 0 24 24" fill="none" stroke="#e8e8e8" stroke-width="2.4" stroke-linecap="round"><circle cx="12" cy="12" r="9.5"/><path d="M12 6.5 V12 L8.5 9.5"/></svg></div>
<div class="abs txt" style="left:1064px;top:199.0px;font-size:12px;color:#e4e4e4">Start time:</div>
<div class="abs" style="left:1137px;top:195.0px;width:177px;height:20px;border-radius:4px;background:#1b1b1b"></div>
<div class="abs txt" style="left:1145px;top:199.0px;font-size:12px;color:#22bfae">06/28/2025, 09:39:19 AM UTC</div>
<div class="abs" style="left:1042px;top:235.5px;width:13px;height:13px;display:flex;align-items:center;justify-content:center"><svg width="13" height="13" viewBox="0 0 24 24" fill="none" stroke="#e8e8e8" stroke-width="2.4" stroke-linecap="round"><circle cx="12" cy="12" r="9.5"/><path d="M12 6.5 V12 L8.5 9.5"/></svg></div>
<div class="abs txt" style="left:1064px;top:236.0px;font-size:12px;color:#e4e4e4">Finish time:</div>
<div class="abs" style="left:1137px;top:232.0px;width:177px;height:20px;border-radius:4px;background:#1b1b1b"></div>
<div class="abs txt" style="left:1145px;top:236.0px;font-size:12px;color:#22bfae">06/28/2025, 09:45:06 AM UTC</div>
<div class="abs" style="left:1042px;top:272.5px;width:13px;height:13px;display:flex;align-items:center;justify-content:center"><svg width="13" height="13" viewBox="0 0 24 24" fill="none" stroke="#e8e8e8" stroke-width="2.4" stroke-linecap="round"><circle cx="12" cy="12" r="9.5"/><path d="M12 6.5 V12 L8.5 9.5"/></svg></div>
<div class="abs txt" style="left:1064px;top:273.0px;font-size:12px;color:#e4e4e4">Duration:</div>
<div class="abs" style="left:1137px;top:269.0px;width:58px;height:20px;border-radius:4px;background:#1b1b1b"></div>
<div class="abs txt" style="left:1145px;top:273.0px;font-size:12px;color:#22bfae">347.58s</div>
<div class="abs" style="left:1042px;top:309.5px;width:13px;height:13px;display:flex;align-items:center;justify-content:center"><svg width="12" height="13" viewBox="0 0 24 24" fill="none" stroke="#e8e8e8" stroke-width="2.4" stroke-linejoin="round"><path d="M5 3 H19 V21 L12 16 L5 21 Z"/></svg></div>
<div class="abs txt" style="left:1064px;top:310.0px;font-size:12px;color:#e4e4e4">Span Kind:</div>
<div class="abs" style="left:1137px;top:306.0px;width:52px;height:20px;border-radius:4px;background:#1b1b1b"></div>
<div class="abs txt" style="left:1145px;top:310.0px;font-size:12px;color:#22bfae">CHAIN</div>
<svg class="abs" style="left:1043px;top:347px" width="13" height="15" viewBox="0 0 13 15" fill="none" stroke="#3b82f6" stroke-width="1.5" stroke-linejoin="round"><path d="M1 1 H8.5 L12 4.5 V14 H1 Z"/><path d="M8.5 1 V4.5 H12"/><path d="M5 7.5 L4 9.5 L5 11.5 M8 7.5 L9 9.5 L8 11.5" stroke-width="1.1"/></svg>
<div class="abs txt" style="left:1066px;top:349px;font-size:12px;font-weight:bold;color:#f0f0f0">Attributes</div>
<svg class="abs" style="left:1539px;top:350px" width="11" height="8" viewBox="0 0 11 8" fill="none" stroke="#b0b4bc" stroke-width="1.5" stroke-linecap="round"><path d="M1.5 2 L5.5 6 L9.5 2"/></svg>
<div class="abs" style="left:0;top:888px;width:1576px;height:1px;background:#0c0c0c"></div>
<div class="abs" style="left:0;top:889px;width:1576px;height:3px;background:#2c2c2c"></div>
</body></html>
